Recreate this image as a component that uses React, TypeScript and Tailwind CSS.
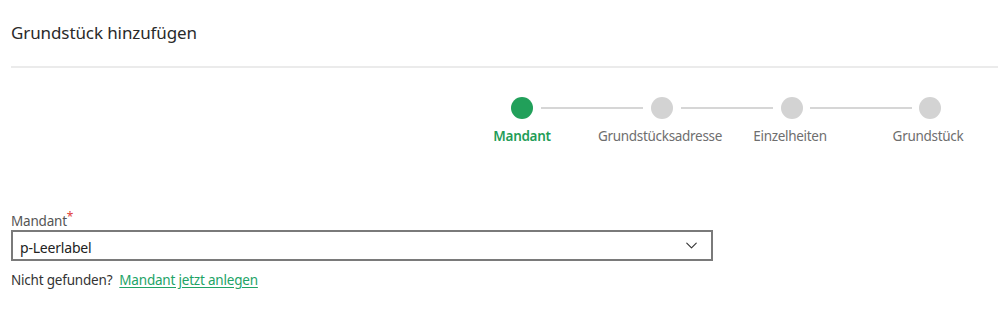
import { ChevronDown } from "lucide-react";

const steps = [
  { label: "Mandant", active: true },
  { label: "Grundstücksadresse", active: false },
  { label: "Einzelheiten", active: false },
  { label: "Grundstück", active: false },
];

function Stepper() {
  return (
    <div className="mt-[29px]">
      <div className="ml-[500px] flex items-center">
        <span className="h-[22px] w-[22px] rounded-full bg-[#21a05a]" />
        <span className="mx-[8px] h-[2px] w-[102px] bg-[#d6d6d6]" />
        <span className="h-[22px] w-[22px] rounded-full bg-[#d3d3d3]" />
        <span className="mx-[8px] h-[2px] w-[92px] bg-[#d6d6d6]" />
        <span className="h-[22px] w-[22px] rounded-full bg-[#d3d3d3]" />
        <span className="mx-[7px] h-[2px] w-[102px] bg-[#d6d6d6]" />
        <span className="h-[22px] w-[22px] rounded-full bg-[#d3d3d3]" />
      </div>
      <div className="ml-[446px] mt-[7px] flex text-[13.5px] leading-[20px] tracking-[-0.3px]">
        <div className="w-[130px] text-center font-semibold text-[#1f9d58]">{steps[0].label}</div>
        <div className="ml-[8px] w-[130px] text-center text-[#6e6e6e]">{steps[1].label}</div>
        <div className="w-[130px] text-center text-[#6e6e6e]">{steps[2].label}</div>
        <div className="ml-[8px] w-[130px] text-center text-[#6e6e6e]">{steps[3].label}</div>
      </div>
    </div>
  );
}

export default function App() {
  return (
    <div className="h-[330px] w-[999px] bg-white pl-[11px] font-['Noto_Sans',sans-serif] text-[#333]">
      <div className="flex h-[66px] items-center pb-[1px]">
        <h1 className="text-[17px] leading-[24px] tracking-[-0.1px] text-[#2a2a2a]">Grundstück hinzufügen</h1>
      </div>
      <div className="h-[2px] w-[987px] bg-[#ebebeb]" />

      <Stepper />

      <div className="mt-[65px] w-[702px] text-[13.5px] tracking-[-0.2px]">
        <label className="block leading-[20px] text-[#555]">
          Mandant<span className="relative -top-[5px] text-[12px] text-[#e0403a]">*</span>
        </label>
        <div className="-mt-[2px] flex h-[31px] items-center justify-between border-2 border-[#7a7a7a] pl-[7px] pr-[10px]">
          <span className="pt-[3px] text-[14px] text-[#222]">p-Leerlabel</span>
          <ChevronDown size={19} strokeWidth={1.4} className="text-[#333]" />
        </div>
        <div className="mt-[9px] flex items-center leading-[20px]">
          <span className="text-[#333]">Nicht gefunden?</span>
          <a href="#" className="ml-[7px] text-[#21a366] underline underline-offset-2">
            Mandant jetzt anlegen
          </a>
        </div>
      </div>
    </div>
  );
}
